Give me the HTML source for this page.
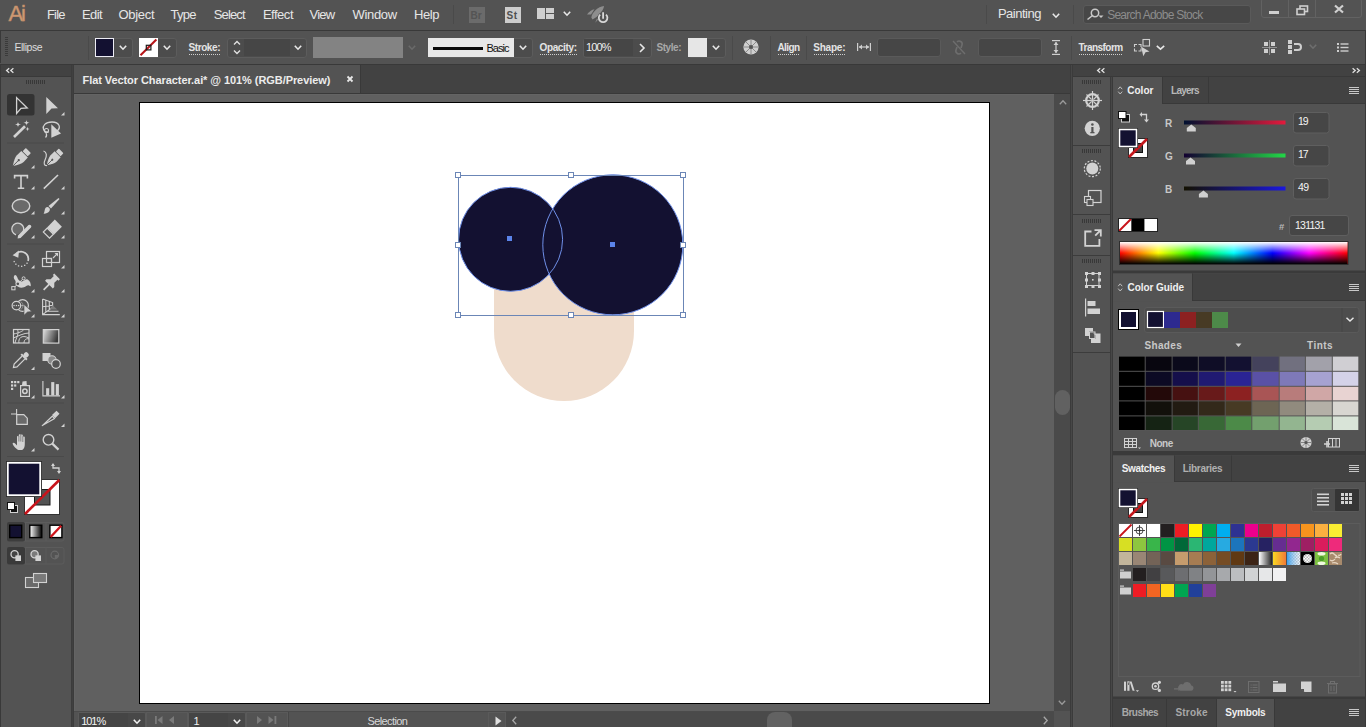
<!DOCTYPE html><html><head><meta charset="utf-8"><style>
html,body{margin:0;padding:0;}
body{width:1366px;height:727px;overflow:hidden;position:relative;background:#535353;font-family:"Liberation Sans",sans-serif;}
.a{position:absolute;box-sizing:border-box;}
.t{position:absolute;white-space:nowrap;line-height:1;}
svg.a{overflow:visible;}
</style></head><body>
<div class="a" style="left:0px;top:0px;width:1366px;height:30px;background:#535353;"></div>
<div class="a" style="left:0px;top:30px;width:1366px;height:1px;background:#393939;"></div>
<div class="t" style="left:8.50px;top:2.68px;font-size:22px;color:#cf9a74;letter-spacing:-2.062px;-webkit-text-stroke:0.5px #c08c68;">Ai</div>
<div class="t" style="left:47.00px;top:8.00px;font-size:13px;color:#e6e6e6;letter-spacing:-0.818px;">File</div>
<div class="t" style="left:82.00px;top:8.00px;font-size:13px;color:#e6e6e6;letter-spacing:-0.635px;">Edit</div>
<div class="t" style="left:118.50px;top:8.00px;font-size:13px;color:#e6e6e6;letter-spacing:-0.316px;">Object</div>
<div class="t" style="left:170.50px;top:8.00px;font-size:13px;color:#e6e6e6;letter-spacing:-0.729px;">Type</div>
<div class="t" style="left:213.80px;top:8.00px;font-size:13px;color:#e6e6e6;letter-spacing:-0.888px;">Select</div>
<div class="t" style="left:262.90px;top:8.00px;font-size:13px;color:#e6e6e6;letter-spacing:-0.480px;">Effect</div>
<div class="t" style="left:309.50px;top:8.00px;font-size:13px;color:#e6e6e6;letter-spacing:-0.751px;">View</div>
<div class="t" style="left:352.50px;top:8.00px;font-size:13px;color:#e6e6e6;letter-spacing:-0.330px;">Window</div>
<div class="t" style="left:414.00px;top:8.00px;font-size:13px;color:#e6e6e6;letter-spacing:-0.450px;">Help</div>
<div class="a" style="left:453px;top:5px;width:1px;height:19px;background:#4a4a4a;"></div>
<div class="a" style="left:469px;top:7px;width:16px;height:16px;background:#6b6b6b;"></div>
<div class="t" style="left:470.50px;top:10.54px;font-size:10px;color:#545454;font-weight:bold;">Br</div>
<div class="a" style="left:505px;top:7px;width:16px;height:16px;background:#cdcdcd;"></div>
<div class="t" style="left:506.50px;top:10.54px;font-size:10px;color:#505050;font-weight:bold;letter-spacing:0.500px;">St</div>
<div class="a" style="left:537px;top:8px;width:8px;height:11px;background:#cfcfcf;"></div>
<div class="a" style="left:546px;top:8px;width:8px;height:5px;background:#cfcfcf;"></div>
<div class="a" style="left:546px;top:14px;width:8px;height:5px;background:#cfcfcf;"></div>
<svg class="a" style="left:563px;top:11px;" width="8" height="5" viewBox="0 0 8 5"><polyline points="0.8,0.8 4.0,4.2 7.2,0.8" fill="none" stroke="#e8e8e8" stroke-width="1.6"/></svg>
<svg class="a" style="left:582px;top:2px;" width="32" height="26" viewBox="0 0 32 26"><path d="M9.3,15.4 C10,10 16,4.5 22,3.9 C21.5,9 16,14.5 10.5,17.5 Z" fill="#8e8e8e"/><path d="M5,12.5 C7,9.5 10,7.5 12.5,7.2 L9,12.5 Z" fill="#8e8e8e"/><path d="M13.2,20.7 L15,16.4 L16.5,17 Z" fill="#8e8e8e"/><circle cx="21.1" cy="15.7" r="5.6" fill="#545454"/><path d="M18.2,12.6 A4.3,4.3 0 1 0 24,12.6" fill="none" stroke="#d8d8d8" stroke-width="1.8"/><rect x="19.6" y="9.5" width="3" height="8" fill="#545454"/><line x1="21.1" y1="10.2" x2="21.1" y2="16.8" stroke="#d8d8d8" stroke-width="1.8"/></svg>
<div class="a" style="left:986px;top:5px;width:1px;height:19px;background:#4a4a4a;"></div>
<div class="t" style="left:997.90px;top:7.00px;font-size:13px;color:#e6e6e6;letter-spacing:-0.486px;">Painting</div>
<svg class="a" style="left:1052px;top:13px;" width="8" height="5" viewBox="0 0 8 5"><polyline points="0.8,0.8 4.0,4.2 7.2,0.8" fill="none" stroke="#e8e8e8" stroke-width="1.6"/></svg>
<div class="a" style="left:1073px;top:5px;width:1px;height:19px;background:#4a4a4a;"></div>
<div class="a" style="left:1083px;top:5px;width:168px;height:19px;background:#474747;border:1px solid #5a5a5a;border-radius:3px;"></div>
<svg class="a" style="left:1086px;top:8px;" width="18" height="12" viewBox="0 0 18 12"><circle cx="9" cy="5" r="3.7" fill="none" stroke="#c8c8c8" stroke-width="1.5"/><line x1="6.5" y1="7.5" x2="1.5" y2="11.5" stroke="#c8c8c8" stroke-width="1.6"/><path d="M12.5,7.5 L17.5,7.5 L15,10 Z" fill="#c8c8c8"/></svg>
<div class="t" style="left:1107.20px;top:8.84px;font-size:12px;color:#8c8c8c;letter-spacing:-0.747px;">Search Adobe Stock</div>
<div class="a" style="left:1261px;top:-2px;width:101px;height:20px;border:1px solid #626262;border-radius:3px;"></div>
<div class="a" style="left:1288px;top:0px;width:1px;height:18px;background:#626262;"></div>
<div class="a" style="left:1315px;top:0px;width:1px;height:18px;background:#626262;"></div>
<div class="a" style="left:1269px;top:11px;width:10px;height:3px;background:#cfcfcf;"></div>
<svg class="a" style="left:1296px;top:5px;" width="13" height="10" viewBox="0 0 13 10"><rect x="4" y="1" width="7.5" height="5.5" fill="none" stroke="#cfcfcf" stroke-width="1.6"/><rect x="1" y="4" width="7.5" height="5.5" fill="#545454" stroke="#cfcfcf" stroke-width="1.6"/></svg>
<svg class="a" style="left:1334px;top:5px;" width="10" height="8" viewBox="0 0 10 8"><path d="M1,0.5 L9,7.5 M9,0.5 L1,7.5" stroke="#d0d0d0" stroke-width="2.2"/></svg>
<div class="a" style="left:0px;top:31px;width:1366px;height:33px;background:#535353;"></div>
<div class="a" style="left:1365px;top:31px;width:1px;height:33px;background:#393939;"></div>
<div class="a" style="left:0px;top:64px;width:1366px;height:1px;background:#393939;"></div>
<div class="a" style="left:0px;top:31px;width:1px;height:32px;background:#393939;"></div>
<div class="a" style="left:5px;top:37px;width:3px;height:1px;background:#3a3a3a;"></div>
<div class="a" style="left:5px;top:39px;width:3px;height:1px;background:#3a3a3a;"></div>
<div class="a" style="left:5px;top:41px;width:3px;height:1px;background:#3a3a3a;"></div>
<div class="a" style="left:5px;top:43px;width:3px;height:1px;background:#3a3a3a;"></div>
<div class="a" style="left:5px;top:45px;width:3px;height:1px;background:#3a3a3a;"></div>
<div class="a" style="left:5px;top:47px;width:3px;height:1px;background:#3a3a3a;"></div>
<div class="a" style="left:5px;top:49px;width:3px;height:1px;background:#3a3a3a;"></div>
<div class="a" style="left:5px;top:51px;width:3px;height:1px;background:#3a3a3a;"></div>
<div class="a" style="left:5px;top:53px;width:3px;height:1px;background:#3a3a3a;"></div>
<div class="a" style="left:5px;top:55px;width:3px;height:1px;background:#3a3a3a;"></div>
<div class="t" style="left:14.50px;top:41.61px;font-size:10.5px;color:#dcdcdc;letter-spacing:-0.487px;">Ellipse</div>
<div class="a" style="left:88px;top:36px;width:1px;height:24px;background:#4a4a4a;"></div>
<div class="a" style="left:95px;top:37.5px;width:38px;height:20px;background:#4c4c4c;border:1px solid #5c5c5c;border-radius:3px;"></div>
<div class="a" style="left:95px;top:38px;width:19px;height:19px;background:#131131;border:1.5px solid #ececf4;"></div>
<svg class="a" style="left:119px;top:45px;" width="8" height="5" viewBox="0 0 8 5"><polyline points="0.8,0.8 4.0,4.2 7.2,0.8" fill="none" stroke="#e8e8e8" stroke-width="1.6"/></svg>
<div class="a" style="left:139px;top:37.5px;width:38px;height:20px;background:#4c4c4c;border:1px solid #5c5c5c;border-radius:3px;"></div>
<svg class="a" style="left:139px;top:38px;" width="19" height="19" viewBox="0 0 19 19"><rect x="0" y="0" width="19" height="19" fill="#ffffff"/><line x1="1.5" y1="17.2" x2="17.4" y2="1.6" stroke="#b8161a" stroke-width="2.1"/><rect x="7.3" y="7.3" width="4.6" height="4.6" fill="none" stroke="#1a1a1a" stroke-width="1.2"/></svg>
<svg class="a" style="left:163px;top:45px;" width="8" height="5" viewBox="0 0 8 5"><polyline points="0.8,0.8 4.0,4.2 7.2,0.8" fill="none" stroke="#e8e8e8" stroke-width="1.6"/></svg>
<div class="t" style="left:188.50px;top:42.83px;font-size:10px;color:#e4e4e4;font-weight:bold;letter-spacing:-0.409px;">Stroke:</div>
<div class="a" style="left:189px;top:54px;width:31px;height:1px;background-image:linear-gradient(90deg,#cfcfcf 50%,transparent 50%);background-size:2px 1px;"></div>
<div class="a" style="left:227px;top:37.5px;width:80px;height:20px;background:#4c4c4c;border:1px solid #5c5c5c;border-radius:3px;"></div>
<div class="a" style="left:244px;top:39px;width:46px;height:17px;background:#464646;"></div>
<svg class="a" style="left:233px;top:40px;" width="8" height="15" viewBox="0 0 8 15"><polyline points="1,4.5 4,1.5 7,4.5" fill="none" stroke="#e0e0e0" stroke-width="1.4"/><polyline points="1,10.5 4,13.5 7,10.5" fill="none" stroke="#e0e0e0" stroke-width="1.4"/></svg>
<svg class="a" style="left:294px;top:45px;" width="8" height="5" viewBox="0 0 8 5"><polyline points="0.8,0.8 4.0,4.2 7.2,0.8" fill="none" stroke="#e8e8e8" stroke-width="1.6"/></svg>
<div class="a" style="left:313px;top:37px;width:90px;height:21px;background:#838383;"></div>
<svg class="a" style="left:408px;top:45px;" width="8" height="5" viewBox="0 0 8 5"><polyline points="0.8,0.8 4.0,4.2 7.2,0.8" fill="none" stroke="#6a6a6a" stroke-width="1.6"/></svg>
<div class="a" style="left:428px;top:37.5px;width:105px;height:20px;background:#4c4c4c;border:1px solid #5c5c5c;border-radius:3px;"></div>
<div class="a" style="left:428px;top:38px;width:86px;height:19px;background:#e8e8e8;"></div>
<div class="a" style="left:433px;top:47px;width:50px;height:3px;background:#0a0a0a;"></div>
<div class="t" style="left:486.50px;top:42.69px;font-size:11px;color:#111;letter-spacing:-0.977px;">Basic</div>
<svg class="a" style="left:519px;top:45px;" width="8" height="5" viewBox="0 0 8 5"><polyline points="0.8,0.8 4.0,4.2 7.2,0.8" fill="none" stroke="#e8e8e8" stroke-width="1.6"/></svg>
<div class="t" style="left:539.50px;top:42.83px;font-size:10px;color:#e4e4e4;font-weight:bold;letter-spacing:-0.359px;">Opacity:</div>
<div class="a" style="left:540px;top:54px;width:37px;height:1px;background-image:linear-gradient(90deg,#cfcfcf 50%,transparent 50%);background-size:2px 1px;"></div>
<div class="a" style="left:583px;top:37.5px;width:69px;height:20px;background:#4c4c4c;border:1px solid #5c5c5c;border-radius:3px;"></div>
<div class="a" style="left:584px;top:39px;width:49px;height:17px;background:#464646;"></div>
<div class="t" style="left:586.00px;top:41.69px;font-size:11px;color:#f0f0f0;letter-spacing:-0.885px;">100%</div>
<svg class="a" style="left:639px;top:43px;" width="6" height="10" viewBox="0 0 6 10"><polyline points="1,1 5,5 1,9" fill="none" stroke="#e8e8e8" stroke-width="1.6"/></svg>
<div class="t" style="left:656.50px;top:42.83px;font-size:10px;color:#a8a8a8;font-weight:bold;letter-spacing:-0.447px;">Style:</div>
<div class="a" style="left:688px;top:37.5px;width:38px;height:20px;background:#4c4c4c;border:1px solid #5c5c5c;border-radius:3px;"></div>
<div class="a" style="left:688px;top:38px;width:19px;height:19px;background:#e6e6e6;"></div>
<svg class="a" style="left:712px;top:45px;" width="8" height="5" viewBox="0 0 8 5"><polyline points="0.8,0.8 4.0,4.2 7.2,0.8" fill="none" stroke="#e8e8e8" stroke-width="1.6"/></svg>
<div class="a" style="left:732px;top:36px;width:1px;height:24px;background:#4a4a4a;"></div>
<svg class="a" style="left:743px;top:39px;" width="16" height="16" viewBox="0 0 16 16"><circle cx="8" cy="8" r="7.6" fill="#cfcfcf"/><g stroke="#8a8a8a" stroke-width="1"><line x1="8" y1="1" x2="8" y2="15"/><line x1="1" y1="8" x2="15" y2="8"/><line x1="3" y1="3" x2="13" y2="13"/><line x1="13" y1="3" x2="3" y2="13"/></g><circle cx="8" cy="8" r="2" fill="#555"/></svg>
<div class="a" style="left:770px;top:36px;width:1px;height:24px;background:#4a4a4a;"></div>
<div class="t" style="left:777.50px;top:42.83px;font-size:10px;color:#e4e4e4;font-weight:bold;letter-spacing:-0.600px;">Align</div>
<div class="a" style="left:778px;top:54px;width:22px;height:1px;background-image:linear-gradient(90deg,#cfcfcf 50%,transparent 50%);background-size:2px 1px;"></div>
<div class="a" style="left:806px;top:36px;width:1px;height:24px;background:#4a4a4a;"></div>
<div class="t" style="left:813.20px;top:42.83px;font-size:10px;color:#e4e4e4;font-weight:bold;letter-spacing:-0.209px;">Shape:</div>
<div class="a" style="left:814px;top:54px;width:31px;height:1px;background-image:linear-gradient(90deg,#cfcfcf 50%,transparent 50%);background-size:2px 1px;"></div>
<svg class="a" style="left:857px;top:43px;" width="14" height="8" viewBox="0 0 14 8"><line x1="0.6" y1="0" x2="0.6" y2="8" stroke="#cfcfcf" stroke-width="1.2"/><line x1="13.4" y1="0" x2="13.4" y2="8" stroke="#cfcfcf" stroke-width="1.2"/><line x1="2" y1="4" x2="12" y2="4" stroke="#cfcfcf" stroke-width="1.2"/><path d="M2,4 L5,1.5 L5,6.5Z M12,4 L9,1.5 L9,6.5Z" fill="#cfcfcf"/></svg>
<div class="a" style="left:877px;top:38px;width:64px;height:19px;background:#464646;border:1px solid #5a5a5a;border-radius:3px;"></div>
<svg class="a" style="left:952px;top:40px;" width="14" height="15" viewBox="0 0 14 15"><path d="M5,2 a3,3 0 0 1 5,3 L9,8 M9,13 a3,3 0 0 1 -5,-3 L5,7" fill="none" stroke="#6e6e6e" stroke-width="1.6"/><line x1="1" y1="1" x2="13" y2="14" stroke="#6e6e6e" stroke-width="1.4"/></svg>
<div class="a" style="left:978px;top:38px;width:64px;height:19px;background:#464646;border:1px solid #5a5a5a;border-radius:3px;"></div>
<svg class="a" style="left:1052px;top:40px;" width="8" height="15" viewBox="0 0 8 15"><line x1="0" y1="0.6" x2="8" y2="0.6" stroke="#cfcfcf" stroke-width="1.2"/><line x1="0" y1="14.4" x2="8" y2="14.4" stroke="#cfcfcf" stroke-width="1.2"/><line x1="4" y1="2" x2="4" y2="13" stroke="#cfcfcf" stroke-width="1.2"/><path d="M4,2 L1.5,5 L6.5,5Z M4,13 L1.5,10 L6.5,10Z" fill="#cfcfcf"/></svg>
<div class="a" style="left:1071px;top:36px;width:1px;height:24px;background:#4a4a4a;"></div>
<div class="t" style="left:1078.50px;top:42.83px;font-size:10px;color:#e4e4e4;font-weight:bold;letter-spacing:-0.526px;">Transform</div>
<div class="a" style="left:1079px;top:54px;width:44px;height:1px;background-image:linear-gradient(90deg,#cfcfcf 50%,transparent 50%);background-size:2px 1px;"></div>
<svg class="a" style="left:1133px;top:38px;" width="18" height="19" viewBox="0 0 18 19"><path d="M1.5,9 V6.5 H4 M5.5,6.5 H8 V9 M8,10.5 V13 H5.5 M4,13 H1.5 V10.5" fill="none" stroke="#cfcfcf" stroke-width="1.1"/><rect x="10" y="1.5" width="6.5" height="6.5" fill="none" stroke="#cfcfcf" stroke-width="1.1"/><path d="M8,8.5 L16.5,13.5 L12.5,14.3 L10.3,18.3 Z" fill="#cfcfcf"/></svg>
<svg class="a" style="left:1156px;top:45px;" width="9" height="5" viewBox="0 0 9 5"><polyline points="0.8,0.8 4.5,4.2 8.2,0.8" fill="none" stroke="#e8e8e8" stroke-width="1.6"/></svg>
<svg class="a" style="left:1262px;top:40px;" width="15" height="15" viewBox="0 0 15 15"><rect x="2" y="2" width="4" height="4" fill="#cfcfcf"/><rect x="9" y="2" width="4" height="4" fill="#cfcfcf"/><rect x="2" y="9" width="4" height="4" fill="#cfcfcf"/><rect x="9" y="9" width="4" height="4" fill="#cfcfcf"/><line x1="7.5" y1="0" x2="7.5" y2="15" stroke="#a0a0a0" stroke-width="0.8"/><line x1="0" y1="7.5" x2="15" y2="7.5" stroke="#a0a0a0" stroke-width="0.8"/></svg>
<svg class="a" style="left:1288px;top:40px;" width="15" height="14" viewBox="0 0 15 14"><rect x="0" y="0" width="4" height="4" fill="#cfcfcf"/><rect x="0" y="5" width="4" height="4" fill="#cfcfcf"/><rect x="0" y="10" width="4" height="4" fill="#cfcfcf"/><path d="M6,4 H10 a3,3 0 0 1 0,6 H6" fill="none" stroke="#cfcfcf" stroke-width="2"/></svg>
<svg class="a" style="left:1309px;top:44px;" width="8" height="5" viewBox="0 0 8 5"><polyline points="0.8,0.8 4.0,4.2 7.2,0.8" fill="none" stroke="#6e6e6e" stroke-width="1.6"/></svg>
<svg class="a" style="left:1337px;top:43px;" width="12" height="9" viewBox="0 0 12 9"><rect x="0" y="0" width="2" height="2" fill="#cfcfcf"/><rect x="0" y="3.5" width="2" height="2" fill="#cfcfcf"/><rect x="0" y="7" width="2" height="2" fill="#cfcfcf"/><rect x="3.5" y="0.3" width="8" height="1.4" fill="#cfcfcf"/><rect x="3.5" y="3.8" width="8" height="1.4" fill="#cfcfcf"/><rect x="3.5" y="7.3" width="8" height="1.4" fill="#cfcfcf"/></svg>
<div class="a" style="left:0px;top:64px;width:1px;height:663px;background:#393939;"></div>
<div class="a" style="left:1px;top:65px;width:70px;height:11px;background:#424242;"></div>
<div class="a" style="left:1px;top:76px;width:70px;height:1px;background:#393939;"></div>
<svg class="a" style="left:5.5px;top:68px;" width="8" height="5" viewBox="0 0 8 5"><path d="M3.2,0.3 L0.6,2.5 L3.2,4.7 M7.4,0.3 L4.8,2.5 L7.4,4.7" fill="none" stroke="#e0e0e0" stroke-width="1.3"/></svg>
<div class="a" style="left:1px;top:77px;width:70px;height:650px;background:#535353;"></div>
<div class="a" style="left:71px;top:65px;width:3px;height:662px;background:#3c3c3c;"></div>
<div class="a" style="left:72px;top:65px;width:1px;height:662px;background:#404040;"></div>
<div class="a" style="left:26px;top:80px;width:1px;height:4px;background:#383838;"></div>
<div class="a" style="left:28px;top:80px;width:1px;height:4px;background:#383838;"></div>
<div class="a" style="left:30px;top:80px;width:1px;height:4px;background:#383838;"></div>
<div class="a" style="left:32px;top:80px;width:1px;height:4px;background:#383838;"></div>
<div class="a" style="left:34px;top:80px;width:1px;height:4px;background:#383838;"></div>
<div class="a" style="left:36px;top:80px;width:1px;height:4px;background:#383838;"></div>
<div class="a" style="left:38px;top:80px;width:1px;height:4px;background:#383838;"></div>
<div class="a" style="left:40px;top:80px;width:1px;height:4px;background:#383838;"></div>
<div class="a" style="left:42px;top:80px;width:1px;height:4px;background:#383838;"></div>
<div class="a" style="left:44px;top:80px;width:1px;height:4px;background:#383838;"></div>
<div class="a" style="left:74px;top:65px;width:996px;height:28px;background:#424242;"></div>
<div class="a" style="left:74px;top:65px;width:286px;height:28px;background:#535353;"></div>
<div class="a" style="left:360px;top:65px;width:1px;height:28px;background:#393939;"></div>
<div class="a" style="left:74px;top:93px;width:996px;height:1px;background:#393939;"></div>
<div class="t" style="left:82.50px;top:74.69px;font-size:11px;color:#ececec;font-weight:bold;letter-spacing:-0.069px;">Flat Vector Character.ai* @ 101% (RGB/Preview)</div>
<svg class="a" style="left:347px;top:76px;" width="6" height="6" viewBox="0 0 6 6"><path d="M0.5,0.5 L5.5,5.5 M5.5,0.5 L0.5,5.5" stroke="#e8e8e8" stroke-width="1.8"/></svg>
<div class="a" style="left:74px;top:94px;width:980px;height:617px;background:#606060;"></div>
<div class="a" style="left:74px;top:94px;width:980px;height:1px;background:#646464;"></div>
<div class="a" style="left:74px;top:94px;width:1px;height:617px;background:#646464;"></div>
<div class="a" style="left:139px;top:102px;width:851px;height:602px;background:#ffffff;border:1px solid #000;"></div>
<div class="a" style="left:1054px;top:94px;width:16px;height:617px;background:#4a4a4a;"></div>
<svg class="a" style="left:1058.5px;top:100px;" width="8" height="5" viewBox="0 0 8 5"><polyline points="0.8,4.2 4,0.8 7.2,4.2" fill="none" stroke="#9a9a9a" stroke-width="1.3"/></svg>
<svg class="a" style="left:1058px;top:700px;" width="8" height="5" viewBox="0 0 8 5"><polyline points="0.8,0.8 4.0,4.2 7.2,0.8" fill="none" stroke="#9a9a9a" stroke-width="1.3"/></svg>
<div class="a" style="left:1055px;top:390px;width:15px;height:25px;background:#616161;border-radius:7.5px;"></div>
<div class="a" style="left:74px;top:711px;width:980px;height:16px;background:#535353;"></div>
<div class="a" style="left:1054px;top:711px;width:16px;height:16px;background:#535353;"></div>
<div class="a" style="left:1070px;top:65px;width:3px;height:662px;background:#3b3b3b;"></div>
<div class="a" style="left:1071px;top:65px;width:1px;height:662px;background:#474747;"></div>
<div class="a" style="left:1073px;top:77px;width:1px;height:650px;background:#555555;"></div>
<div class="a" style="left:1073px;top:65px;width:293px;height:11px;background:#424242;"></div>
<div class="a" style="left:1073px;top:76px;width:293px;height:1px;background:#393939;"></div>
<svg class="a" style="left:1097px;top:68px;" width="8" height="5" viewBox="0 0 8 5"><path d="M3.2,0.3 L0.6,2.5 L3.2,4.7 M7.4,0.3 L4.8,2.5 L7.4,4.7" fill="none" stroke="#e0e0e0" stroke-width="1.3"/></svg>
<svg class="a" style="left:1351.5px;top:68px;" width="8" height="5" viewBox="0 0 8 5"><path d="M0.6,0.3 L3.2,2.5 L0.6,4.7 M4.8,0.3 L7.4,2.5 L4.8,4.7" fill="none" stroke="#e0e0e0" stroke-width="1.3"/></svg>
<div class="a" style="left:1074px;top:77px;width:36px;height:650px;background:#535353;"></div>
<div class="a" style="left:1110px;top:77px;width:3px;height:650px;background:#3a3a3a;"></div>
<div class="a" style="left:1111px;top:77px;width:1px;height:650px;background:#474747;"></div>
<div class="a" style="left:1365px;top:77px;width:1px;height:650px;background:#3a3a3a;"></div>
<div class="a" style="left:1113px;top:77px;width:252px;height:650px;background:#535353;"></div>
<div class="a" style="left:1365px;top:65px;width:1px;height:662px;background:#393939;"></div>
<svg class="a" style="left:0;top:0" width="73" height="727" viewBox="0 0 73 727"><rect x="7" y="142.5" width="57" height="1" fill="#4a4a4a"/><rect x="7" y="243.5" width="57" height="1" fill="#4a4a4a"/><rect x="7" y="321.0" width="57" height="1" fill="#4a4a4a"/><rect x="7" y="374.0" width="57" height="1" fill="#4a4a4a"/><rect x="7" y="402.5" width="57" height="1" fill="#4a4a4a"/><rect x="7" y="456.0" width="57" height="1" fill="#4a4a4a"/><rect x="7" y="94" width="27.5" height="21.5" rx="2.5" fill="#333333"/><path d="M16.6,97.6 L27.2,108 L21,108.3 L16.6,113.4 Z" fill="none" stroke="#d2d2d2" stroke-width="1.3" stroke-linejoin="miter"/><path d="M46.3,97 L58,108.2 L51.5,108.5 L46.3,114 Z" fill="#d2d2d2"/><path d="M61.0,115.5 L64.5,115.5 L64.5,112.0 Z" fill="#d2d2d2"/><line x1="14" y1="137" x2="25" y2="126.3" stroke="#d2d2d2" stroke-width="2.6"/><path d="M18,121.3 Q18,124.5 21.2,124.5 Q18,124.5 18,127.7 Q18,124.5 14.8,124.5 Q18,124.5 18,121.3 Z" fill="#d2d2d2"/><path d="M26.5,119.6 Q26.5,122.8 29.7,122.8 Q26.5,122.8 26.5,126.0 Q26.5,122.8 23.3,122.8 Q26.5,122.8 26.5,119.6 Z" fill="#d2d2d2"/><path d="M27.5,126.8 Q27.5,129 29.7,129 Q27.5,129 27.5,131.2 Q27.5,129 25.3,129 Q27.5,129 27.5,126.8 Z" fill="#d2d2d2"/><path d="M57,131 C61,128 60,122 52,122 C45,122 42.5,126 43.5,129 C44,131 46,132.5 48.5,132" fill="none" stroke="#d2d2d2" stroke-width="1.3"/><circle cx="46.5" cy="130.5" r="2" fill="none" stroke="#d2d2d2" stroke-width="1.1"/><path d="M46,133 Q47.5,136 45.5,137.5" fill="none" stroke="#d2d2d2" stroke-width="1.1"/><path d="M51.3,124.3 L61,133.5 L51.3,137.8 Z" fill="#d2d2d2"/><g transform="translate(20.6,158.3) rotate(45) scale(1.0)"><rect x="-3.6" y="-11" width="7.2" height="4.6" rx="0.8" fill="#d2d2d2"/><path d="M-4.6,-5.6 L4.6,-5.6 L4.8,0.5 Q4.6,4.5 0,11 Q-4.6,4.5 -4.8,0.5 Z" fill="#d2d2d2"/><line x1="0" y1="3" x2="0" y2="11" stroke="#535353" stroke-width="0.9"/><circle cx="0" cy="2.6" r="1.1" fill="#535353"/></g><path d="M31.0,168.5 L34.5,168.5 L34.5,165.0 Z" fill="#d2d2d2"/><g transform="translate(54,158) rotate(45) scale(0.92)"><rect x="-3.6" y="-11" width="7.2" height="4.6" rx="0.8" fill="#d2d2d2"/><path d="M-4.6,-5.6 L4.6,-5.6 L4.8,0.5 Q4.6,4.5 0,11 Q-4.6,4.5 -4.8,0.5 Z" fill="#d2d2d2"/><line x1="0" y1="3" x2="0" y2="11" stroke="#535353" stroke-width="0.9"/><circle cx="0" cy="2.6" r="1.1" fill="#535353"/></g><path d="M43.5,151 C47,152 47,156 45,160 C43.5,163 44,166 47,165.5" fill="none" stroke="#d2d2d2" stroke-width="1.2"/><path d="M14.6,178.5 V175.6 H27.4 V178.5 M21,175.6 V188.2 M17.8,188.2 H24.2" fill="none" stroke="#d2d2d2" stroke-width="1.6"/><path d="M31.0,189.5 L34.5,189.5 L34.5,186.0 Z" fill="#d2d2d2"/><line x1="43.8" y1="188.6" x2="58" y2="175" stroke="#d2d2d2" stroke-width="1.6"/><path d="M61.0,189.5 L64.5,189.5 L64.5,186.0 Z" fill="#d2d2d2"/><ellipse cx="21" cy="206" rx="8.8" ry="6.7" fill="#6a6a6a" stroke="#d2d2d2" stroke-width="1.4"/><path d="M31.0,214.5 L34.5,214.5 L34.5,211.0 Z" fill="#d2d2d2"/><path d="M58.5,198 L59.5,199 L51,208.5 L48.5,206 Z" fill="#d2d2d2"/><path d="M47.5,207 C49.5,207.5 50.5,209 49.5,211 C48,213.5 45,213.8 43.5,213.6 C44.5,212.5 44.5,210.5 45,209 C45.5,207.5 46.5,206.8 47.5,207 Z" fill="#d2d2d2"/><path d="M61.0,214.5 L64.5,214.5 L64.5,211.0 Z" fill="#d2d2d2"/><path d="M22.7,232.5 A6,6 0 1 0 16,234.8" fill="#6a6a6a" stroke="#d2d2d2" stroke-width="1.3"/><path d="M18,235.6 L28.5,225 A1.8,1.8 0 0 1 31,227.5 L20.5,238 L17.6,238.6 Z" fill="#d2d2d2"/><path d="M31.0,238.5 L34.5,238.5 L34.5,235.0 Z" fill="#d2d2d2"/><g transform="translate(52,229.5) rotate(45)"><rect x="-5" y="-9" width="10" height="11" fill="#d2d2d2"/><rect x="-4.4" y="2.4" width="8.8" height="5.5" fill="none" stroke="#d2d2d2" stroke-width="1.2"/></g><path d="M61.0,238.5 L64.5,238.5 L64.5,235.0 Z" fill="#d2d2d2"/><path d="M16.8,253 A7.3,7.3 0 0 1 28.05,260.9" fill="none" stroke="#d2d2d2" stroke-width="1.7"/><path d="M12.6,255.2 L19,250.6 L18.3,257.8 Z" fill="#d2d2d2"/><rect x="26.38" y="262.59" width="1.3" height="1.3" fill="#d2d2d2"/><rect x="24.05" y="264.72" width="1.3" height="1.3" fill="#d2d2d2"/><rect x="21.04" y="265.67" width="1.3" height="1.3" fill="#d2d2d2"/><rect x="17.90" y="265.26" width="1.3" height="1.3" fill="#d2d2d2"/><rect x="15.24" y="263.56" width="1.3" height="1.3" fill="#d2d2d2"/><rect x="13.54" y="260.90" width="1.3" height="1.3" fill="#d2d2d2"/><path d="M31.0,268.5 L34.5,268.5 L34.5,265.0 Z" fill="#d2d2d2"/><rect x="46.5" y="251.5" width="13" height="11" fill="none" stroke="#d2d2d2" stroke-width="1.2"/><rect x="42.5" y="258.5" width="9" height="8" fill="#535353" stroke="#d2d2d2" stroke-width="1.2"/><rect x="46.5" y="258.5" width="5" height="4" fill="none" stroke="#d2d2d2" stroke-width="1.2"/><line x1="53" y1="258" x2="57.5" y2="253.5" stroke="#d2d2d2" stroke-width="1.1"/><path d="M58,253 L54.5,253 L58,256.5 Z" fill="#d2d2d2"/><path d="M61.0,268.5 L64.5,268.5 L64.5,265.0 Z" fill="#d2d2d2"/><path d="M14.8,275 C13.2,276.5 13.6,278.8 15,280 C16,281.5 15.6,283 16.5,285 C18,287.6 21,288.2 24,287.2 C26,286.4 27.6,284.6 29,285.4 C30,286 30.6,286.6 30.8,285.8 C31,283.8 30,280.4 27.6,279.4 C25.6,278.8 24,281 22,281.4 C19.4,281.8 18,279.6 17.4,277.6 C16.9,276 15.8,274.6 14.8,275 Z" fill="#d2d2d2"/><line x1="13.4" y1="288.2" x2="23.5" y2="278.4" stroke="#d2d2d2" stroke-width="1"/><circle cx="17.8" cy="283.8" r="1.9" fill="#535353" stroke="#d2d2d2" stroke-width="1.1"/><rect x="11.8" y="286.6" width="3.2" height="3.2" fill="#535353" stroke="#d2d2d2" stroke-width="1"/><circle cx="23.6" cy="278.3" r="1.5" fill="#535353" stroke="#d2d2d2" stroke-width="1"/><path d="M31.0,292.5 L34.5,292.5 L34.5,289.0 Z" fill="#d2d2d2"/><g transform="translate(50,283.5) rotate(45)"><path d="M-4,-10 H4 V-8 H2.6 V-3.5 L5.5,-0.5 V1.5 H-5.5 V-0.5 L-2.6,-3.5 V-8 H-4 Z" fill="#d2d2d2"/><line x1="0" y1="1" x2="0" y2="9" stroke="#d2d2d2" stroke-width="1.7"/></g><path d="M61.0,292.5 L64.5,292.5 L64.5,289.0 Z" fill="#d2d2d2"/><circle cx="22.6" cy="305.5" r="5.8" fill="none" stroke="#d2d2d2" stroke-width="1.2"/><circle cx="16.4" cy="305.6" r="4.3" fill="#535353" stroke="#d2d2d2" stroke-width="1.2"/><path d="M20.5,301.6 A4.3,4.3 0 0 1 20.5,309.6" fill="none" stroke="#8a8a8a" stroke-width="1"/><rect x="13.4" y="304.9" width="1.3" height="1.3" fill="#d2d2d2"/><rect x="15.799999999999999" y="304.9" width="1.3" height="1.3" fill="#d2d2d2"/><rect x="18.0" y="304.9" width="1.3" height="1.3" fill="#d2d2d2"/><rect x="20.2" y="304.9" width="1.3" height="1.3" fill="#d2d2d2"/><rect x="22.299999999999997" y="304.9" width="1.3" height="1.3" fill="#d2d2d2"/><path d="M24,304.4 L31.8,311.6 L27.5,312 L24,315.2 Z" fill="#d2d2d2" stroke="#535353" stroke-width="0.6"/><path d="M31.0,317.5 L34.5,317.5 L34.5,314.0 Z" fill="#d2d2d2"/><path d="M42.6,299 V314.6 H59.8 M42.6,299 L52.6,302.6 V307.3 L42.6,314.6 M42.6,306.7 L52.6,305.2 M45.8,300.2 V312.3 M49.3,301.4 V309.7 M47,311.3 H58.5" fill="none" stroke="#d2d2d2" stroke-width="1.1"/><path d="M52.6,305.3 L57.3,309.5 L49.5,309.5 Z" fill="#7c7c7c"/><path d="M61.0,317.5 L64.5,317.5 L64.5,314.0 Z" fill="#d2d2d2"/><rect x="13.5" y="329.5" width="15.5" height="13.5" fill="none" stroke="#d2d2d2" stroke-width="1.2"/><path d="M13.5,334 C19,333 23,331 24,329.5 M13.5,338 C18,336 24,333 29,333 M19,343 C18,339 21,334 29,338 M15,343 C16,338 20,332 17,329.5 M24,343 C24,340 26,338 29,339" fill="none" stroke="#d2d2d2" stroke-width="1"/><defs><linearGradient id="gtool" x1="0" x2="1" y1="0" y2="0.3"><stop offset="0" stop-color="#e0e0e0"/><stop offset="1" stop-color="#3a3a3a"/></linearGradient><linearGradient id="gsw" x1="0" x2="1"><stop offset="0" stop-color="#ffffff"/><stop offset="1" stop-color="#000000"/></linearGradient></defs><rect x="43.3" y="329.6" width="15.5" height="13.5" fill="url(#gtool)" stroke="#d2d2d2" stroke-width="1.2"/><g transform="translate(20.5,360.5) rotate(45)"><rect x="-2.5" y="-10.5" width="5" height="5" rx="2" fill="#d2d2d2"/><rect x="-4" y="-6" width="8" height="2" fill="#d2d2d2"/><path d="M-2,-4 V7 L0,10 L2,7 V-4" fill="none" stroke="#d2d2d2" stroke-width="1.2"/></g><path d="M31.0,370 L34.5,370 L34.5,366.5 Z" fill="#d2d2d2"/><rect x="42.5" y="353" width="8" height="8" fill="#d2d2d2"/><circle cx="52" cy="360" r="4.2" fill="#888" stroke="#d2d2d2" stroke-width="1.1"/><circle cx="56" cy="364" r="4.3" fill="#535353" stroke="#d2d2d2" stroke-width="1.2"/><rect x="11" y="381" width="2.2" height="2.2" fill="#d2d2d2"/><rect x="14.1" y="381" width="2.2" height="2.2" fill="#d2d2d2"/><rect x="17.2" y="381" width="2.2" height="2.2" fill="#d2d2d2"/><rect x="11" y="384.4" width="2.2" height="2.2" fill="#d2d2d2"/><rect x="14.1" y="384.4" width="2.2" height="2.2" fill="#d2d2d2"/><rect x="11" y="387.8" width="2.2" height="2.2" fill="#d2d2d2"/><rect x="20.6" y="385.6" width="8.8" height="10.8" fill="none" stroke="#d2d2d2" stroke-width="1.2"/><path d="M22,385 L22.5,381.5 L26.5,381 L26.8,385 Z" fill="#d2d2d2"/><circle cx="24.9" cy="391.2" r="2.2" fill="none" stroke="#d2d2d2" stroke-width="1.5"/><path d="M31.0,398.5 L34.5,398.5 L34.5,395.0 Z" fill="#d2d2d2"/><path d="M42.9,381 V395.9 H60" fill="none" stroke="#d2d2d2" stroke-width="1.1"/><rect x="46.1" y="388.2" width="3.1" height="7.2" fill="#d2d2d2"/><rect x="51.2" y="382.1" width="3.1" height="13.3" fill="#d2d2d2"/><rect x="55.8" y="384.1" width="3.1" height="11.3" fill="#d2d2d2"/><path d="M61.0,398.5 L64.5,398.5 L64.5,395.0 Z" fill="#d2d2d2"/><path d="M16.6,409 V415 M11,414 H17" stroke="#d2d2d2" stroke-width="1.1"/><path d="M16.7,414.6 H23.8 L27.3,418.2 V424.3 H16.7 Z" fill="#6a6a6a" stroke="#d2d2d2" stroke-width="1.2"/><path d="M42.3,425.6 L52.3,416.2 L54.6,418.6 Z" fill="none" stroke="#d2d2d2" stroke-width="1.2" stroke-linejoin="round"/><path d="M52,415 L56.5,410.8 L59.5,413.8 L55.2,418.2 Z" fill="#d2d2d2"/><path d="M61.0,427 L64.5,427 L64.5,423.5 Z" fill="#d2d2d2"/><path d="M18.5,450 C15.5,449 12.5,444.5 12.6,443.6 C12.8,442.6 14.2,442.6 15.4,443.8 L17,445.4 V437 C17,435.6 18.8,435.6 18.8,437 V442 V435.2 C18.8,433.8 20.8,433.8 20.8,435.2 V442 V435.6 C20.8,434.2 22.8,434.2 22.8,435.6 V442.4 V437.6 C22.8,436.2 24.8,436.2 24.8,437.6 V444 C24.8,447.5 23.5,450 21.5,450 Z" fill="#d2d2d2"/><path d="M18.9,436 V441.5 M20.8,435 V441.5 M22.8,436.5 V442" stroke="#535353" stroke-width="0.6"/><path d="M31.0,451.5 L34.5,451.5 L34.5,448.0 Z" fill="#d2d2d2"/><circle cx="48.5" cy="439.8" r="5.3" fill="none" stroke="#d2d2d2" stroke-width="1.4"/><line x1="52.3" y1="443.6" x2="58.5" y2="449.6" stroke="#d2d2d2" stroke-width="2.2"/><rect x="24.5" y="479.5" width="35" height="35" fill="#ffffff" stroke="#333" stroke-width="1"/><rect x="34.5" y="489.5" width="15.5" height="15.5" fill="#535353" stroke="#1a1a1a" stroke-width="1"/><line x1="25" y1="514" x2="59.3" y2="480" stroke="#c8141b" stroke-width="2.6"/><rect x="6.5" y="461.5" width="35" height="35" fill="#131131" stroke="#2a2a2a" stroke-width="1"/><rect x="7.8" y="462.8" width="32.4" height="32.4" fill="none" stroke="#ffffff" stroke-width="1.8"/><path d="M53,464 L53,468 L59,468 L59,471.5" fill="none" stroke="#d2d2d2" stroke-width="1.3"/><path d="M51,466 L53,463 L55,466 Z M57,471 L59,474 L61,471 Z" fill="#d2d2d2"/><rect x="10.5" y="505.5" width="7" height="7" fill="#111" stroke="#d2d2d2" stroke-width="1"/><rect x="7.5" y="502.5" width="7" height="7" fill="#fff" stroke="#111" stroke-width="1"/><rect x="7.5" y="522.5" width="56.5" height="18.5" rx="2" fill="none" stroke="#5c5c5c" stroke-width="1"/><rect x="7" y="522" width="18" height="19.5" rx="2" fill="#3d3d3d"/><rect x="25" y="522.5" width="1" height="18.5" fill="#5c5c5c"/><rect x="45.5" y="522.5" width="1" height="18.5" fill="#5c5c5c"/><rect x="9.7" y="525.2" width="12" height="12.4" fill="#131131" stroke="#000" stroke-width="1.4"/><rect x="29.8" y="525.2" width="12" height="12.4" fill="url(#gsw)" stroke="#000" stroke-width="1.4"/><rect x="49.9" y="525.2" width="12" height="12.4" fill="#fff" stroke="#000" stroke-width="1.4"/><line x1="50.6" y1="537" x2="61.2" y2="525.8" stroke="#d0141b" stroke-width="2.4"/><rect x="7.5" y="547.5" width="56.5" height="16.5" rx="2" fill="none" stroke="#5c5c5c" stroke-width="1"/><rect x="7" y="547" width="18" height="17.5" rx="2" fill="#3a3a3a"/><rect x="25" y="547.5" width="1" height="16.5" fill="#5a5a5a"/><rect x="45.5" y="547.5" width="1" height="16.5" fill="#5a5a5a"/><circle cx="14.6" cy="554.3" r="3.6" fill="#444" stroke="#d2d2d2" stroke-width="1.3"/><rect x="15.4" y="555.4" width="5.6" height="5.6" fill="#d2d2d2"/><circle cx="34.6" cy="554.3" r="3.6" fill="#7a7a7a" stroke="#d2d2d2" stroke-width="1.3"/><rect x="35.4" y="555.4" width="5.6" height="5.6" fill="#d2d2d2"/><circle cx="54.8" cy="555" r="3.8" fill="none" stroke="#6a6a6a" stroke-width="1.2"/><path d="M54.8,555 L58.6,555 A3.8,3.8 0 0 1 54.8,558.8 Z" fill="#6a6a6a"/><rect x="25.5" y="577.5" width="13" height="10" fill="#6a6a6a" stroke="#d2d2d2" stroke-width="1.1"/><rect x="33.5" y="573.5" width="13" height="9" fill="#7a7a7a" stroke="#d2d2d2" stroke-width="1.1"/></svg>
<svg class="a" style="left:0;top:0" width="1054" height="711" viewBox="0 0 1054 711"><path d="M494,262 H634 V331 A70,70 0 0 1 494,331 Z" fill="#efdccc"/><circle cx="510.6" cy="239.3" r="52" fill="#131131"/><circle cx="612.8" cy="244.8" r="70" fill="#131131"/><circle cx="510.6" cy="239.3" r="52" fill="none" stroke="#6f8fe8" stroke-width="1"/><circle cx="612.8" cy="244.8" r="70" fill="none" stroke="#6f8fe8" stroke-width="1"/><rect x="458.5" y="175.5" width="225" height="140" fill="none" stroke="#6b86b6" stroke-width="1"/><rect x="455.5" y="172.5" width="5" height="5" fill="#ffffff" stroke="#6b86b6" stroke-width="1"/><rect x="568.5" y="172.5" width="5" height="5" fill="#ffffff" stroke="#6b86b6" stroke-width="1"/><rect x="680.5" y="172.5" width="5" height="5" fill="#ffffff" stroke="#6b86b6" stroke-width="1"/><rect x="455.5" y="242.5" width="5" height="5" fill="#ffffff" stroke="#6b86b6" stroke-width="1"/><rect x="680.5" y="242.5" width="5" height="5" fill="#ffffff" stroke="#6b86b6" stroke-width="1"/><rect x="455.5" y="312.5" width="5" height="5" fill="#ffffff" stroke="#6b86b6" stroke-width="1"/><rect x="568.5" y="312.5" width="5" height="5" fill="#ffffff" stroke="#6b86b6" stroke-width="1"/><rect x="680.5" y="312.5" width="5" height="5" fill="#ffffff" stroke="#6b86b6" stroke-width="1"/><rect x="507" y="236" width="5" height="5" fill="#5b84ea"/><rect x="610" y="242" width="5" height="5" fill="#5b84ea"/></svg>
<div class="a" style="left:74px;top:711px;width:980px;height:1px;background:#4b4b4b;"></div>
<div class="a" style="left:78px;top:712px;width:68px;height:15px;background:#484848;border:1px solid #5a5a5a;border-bottom:none;border-radius:2px 2px 0 0;"></div>
<div class="a" style="left:79px;top:713px;width:49px;height:14px;background:#454545;"></div>
<svg class="a" style="left:133px;top:719px;" width="8" height="5" viewBox="0 0 8 5"><polyline points="0.8,0.8 4,4.2 7.2,0.8" fill="none" stroke="#f0f0f0" stroke-width="1.6"/></svg>
<div class="a" style="left:146px;top:712px;width:42px;height:15px;background:#535353;border:1px solid #5a5a5a;border-bottom:none;"></div>
<svg class="a" style="left:155px;top:716px;" width="22" height="9" viewBox="0 0 22 9"><rect x="0" y="0" width="1.8" height="8" fill="#7a7a7a"/><path d="M7.5,0 L2.5,4 L7.5,8Z" fill="#7a7a7a"/><path d="M19,0 L14,4 L19,8Z" fill="#7a7a7a"/></svg>
<div class="a" style="left:188px;top:712px;width:58px;height:15px;background:#484848;border:1px solid #5a5a5a;border-bottom:none;border-radius:2px 2px 0 0;"></div>
<div class="a" style="left:189px;top:713px;width:39px;height:14px;background:#454545;"></div>
<svg class="a" style="left:233px;top:719px;" width="8" height="5" viewBox="0 0 8 5"><polyline points="0.8,0.8 4,4.2 7.2,0.8" fill="none" stroke="#f0f0f0" stroke-width="1.6"/></svg>
<div class="a" style="left:246px;top:712px;width:42px;height:15px;background:#535353;border:1px solid #5a5a5a;border-bottom:none;"></div>
<svg class="a" style="left:257px;top:716px;" width="22" height="9" viewBox="0 0 22 9"><path d="M0,0 L5,4 L0,8Z" fill="#7a7a7a"/><path d="M11.5,0 L16.5,4 L11.5,8Z" fill="#7a7a7a"/><rect x="17.5" y="0" width="1.8" height="8" fill="#7a7a7a"/></svg>
<div class="a" style="left:288px;top:712px;width:1px;height:15px;background:#474747;"></div>
<div class="t" style="left:81.20px;top:715.69px;font-size:11px;color:#f4f4f4;letter-spacing:-1.052px;">101%</div>
<div class="t" style="left:193.50px;top:715.69px;font-size:11px;color:#f0f0f0;">1</div>
<div class="t" style="left:367.50px;top:716.19px;font-size:11px;color:#d8d8d8;letter-spacing:-0.598px;">Selection</div>
<div class="a" style="left:488px;top:712px;width:18px;height:15px;background:#535353;border:1px solid #5a5a5a;border-bottom:none;"></div>
<svg class="a" style="left:495px;top:716px;" width="7" height="10" viewBox="0 0 7 10"><path d="M0.5,0.5 L6.5,5 L0.5,9.5Z" fill="#e0e0e0"/></svg>
<div class="a" style="left:506px;top:712px;width:548px;height:15px;background:#4a4a4a;"></div>
<svg class="a" style="left:512px;top:715.5px;" width="5" height="9" viewBox="0 0 5 9"><polyline points="4.2,0.8 0.8,4.5 4.2,8.2" fill="none" stroke="#a8a8a8" stroke-width="1.3"/></svg>
<svg class="a" style="left:1043px;top:715.5px;" width="5" height="9" viewBox="0 0 5 9"><polyline points="0.8,0.8 4.2,4.5 0.8,8.2" fill="none" stroke="#a8a8a8" stroke-width="1.3"/></svg>
<div class="a" style="left:767px;top:712px;width:25px;height:15px;background:#626262;border-radius:8px 8px 0 0/8px 8px 0 0;"></div>
<svg class="a" style="left:0;top:0" width="1366" height="727" viewBox="0 0 1366 727"><rect x="1082" y="80" width="1" height="4" fill="#383838"/><rect x="1084" y="80" width="1" height="4" fill="#383838"/><rect x="1086" y="80" width="1" height="4" fill="#383838"/><rect x="1088" y="80" width="1" height="4" fill="#383838"/><rect x="1090" y="80" width="1" height="4" fill="#383838"/><rect x="1092" y="80" width="1" height="4" fill="#383838"/><rect x="1094" y="80" width="1" height="4" fill="#383838"/><rect x="1096" y="80" width="1" height="4" fill="#383838"/><rect x="1098" y="80" width="1" height="4" fill="#383838"/><rect x="1100" y="80" width="1" height="4" fill="#383838"/><circle cx="1092.5" cy="100.5" r="6.3" fill="none" stroke="#d2d2d2" stroke-width="2.2"/><circle cx="1092.5" cy="100.5" r="1.5" fill="#d2d2d2"/><line x1="1094.00" y1="100.50" x2="1102.00" y2="100.50" stroke="#d2d2d2" stroke-width="1.2"/><line x1="1093.56" y1="101.56" x2="1098.51" y2="106.51" stroke="#d2d2d2" stroke-width="1.2"/><line x1="1092.50" y1="102.00" x2="1092.50" y2="110.00" stroke="#d2d2d2" stroke-width="1.2"/><line x1="1091.44" y1="101.56" x2="1086.49" y2="106.51" stroke="#d2d2d2" stroke-width="1.2"/><line x1="1091.00" y1="100.50" x2="1083.00" y2="100.50" stroke="#d2d2d2" stroke-width="1.2"/><line x1="1091.44" y1="99.44" x2="1086.49" y2="94.49" stroke="#d2d2d2" stroke-width="1.2"/><line x1="1092.50" y1="99.00" x2="1092.50" y2="91.00" stroke="#d2d2d2" stroke-width="1.2"/><line x1="1093.56" y1="99.44" x2="1098.51" y2="94.49" stroke="#d2d2d2" stroke-width="1.2"/><circle cx="1092.3" cy="128.3" r="7.6" fill="#d2d2d2"/><rect x="1091.3" y="127" width="2.2" height="5.5" fill="#535353"/><rect x="1090.3" y="132" width="4.2" height="1.3" fill="#535353"/><circle cx="1092.4" cy="124.5" r="1.3" fill="#535353"/><rect x="1073" y="145" width="37" height="1" fill="#3c3c3c"/><rect x="1082" y="149" width="1" height="4" fill="#383838"/><rect x="1084" y="149" width="1" height="4" fill="#383838"/><rect x="1086" y="149" width="1" height="4" fill="#383838"/><rect x="1088" y="149" width="1" height="4" fill="#383838"/><rect x="1090" y="149" width="1" height="4" fill="#383838"/><rect x="1092" y="149" width="1" height="4" fill="#383838"/><rect x="1094" y="149" width="1" height="4" fill="#383838"/><rect x="1096" y="149" width="1" height="4" fill="#383838"/><rect x="1098" y="149" width="1" height="4" fill="#383838"/><rect x="1100" y="149" width="1" height="4" fill="#383838"/><circle cx="1092.3" cy="168.6" r="6" fill="#d2d2d2"/><circle cx="1092.3" cy="168.6" r="8" fill="none" stroke="#d2d2d2" stroke-width="1.2" stroke-dasharray="2 1.6"/><rect x="1088.5" y="190.5" width="12.5" height="12" fill="none" stroke="#d2d2d2" stroke-width="1.2"/><rect x="1084.5" y="196.5" width="6" height="6" fill="#535353" stroke="#d2d2d2" stroke-width="1.1"/><rect x="1087" y="199.5" width="6" height="6" fill="#535353" stroke="#d2d2d2" stroke-width="1.1"/><rect x="1073" y="214" width="37" height="1" fill="#3c3c3c"/><rect x="1082" y="219" width="1" height="4" fill="#383838"/><rect x="1084" y="219" width="1" height="4" fill="#383838"/><rect x="1086" y="219" width="1" height="4" fill="#383838"/><rect x="1088" y="219" width="1" height="4" fill="#383838"/><rect x="1090" y="219" width="1" height="4" fill="#383838"/><rect x="1092" y="219" width="1" height="4" fill="#383838"/><rect x="1094" y="219" width="1" height="4" fill="#383838"/><rect x="1096" y="219" width="1" height="4" fill="#383838"/><rect x="1098" y="219" width="1" height="4" fill="#383838"/><rect x="1100" y="219" width="1" height="4" fill="#383838"/><path d="M1091.5,231.5 H1085.2 V245.8 H1099.4 V239" fill="none" stroke="#d2d2d2" stroke-width="1.8"/><path d="M1095.2,235.6 L1100.8,230 M1094.5,230.2 H1100.8 V236.4" fill="none" stroke="#d2d2d2" stroke-width="1.8"/><rect x="1073" y="255" width="37" height="1" fill="#3c3c3c"/><rect x="1082" y="259" width="1" height="4" fill="#383838"/><rect x="1084" y="259" width="1" height="4" fill="#383838"/><rect x="1086" y="259" width="1" height="4" fill="#383838"/><rect x="1088" y="259" width="1" height="4" fill="#383838"/><rect x="1090" y="259" width="1" height="4" fill="#383838"/><rect x="1092" y="259" width="1" height="4" fill="#383838"/><rect x="1094" y="259" width="1" height="4" fill="#383838"/><rect x="1096" y="259" width="1" height="4" fill="#383838"/><rect x="1098" y="259" width="1" height="4" fill="#383838"/><rect x="1100" y="259" width="1" height="4" fill="#383838"/><rect x="1086.5" y="273.5" width="12.5" height="12" fill="none" stroke="#d2d2d2" stroke-width="1"/><rect x="1085" y="272" width="3" height="3" fill="#d2d2d2"/><rect x="1091.5" y="272" width="3" height="3" fill="#d2d2d2"/><rect x="1098" y="272" width="3" height="3" fill="#d2d2d2"/><rect x="1085" y="278.5" width="3" height="3" fill="#d2d2d2"/><rect x="1098" y="278.5" width="3" height="3" fill="#d2d2d2"/><rect x="1085" y="285" width="3" height="3" fill="#d2d2d2"/><rect x="1091.5" y="285" width="3" height="3" fill="#d2d2d2"/><rect x="1098" y="285" width="3" height="3" fill="#d2d2d2"/><rect x="1092" y="279" width="1.6" height="1.6" fill="#d2d2d2"/><rect x="1085" y="298.5" width="1.2" height="18" fill="#d2d2d2"/><rect x="1087.5" y="301" width="8" height="5" fill="#d2d2d2"/><rect x="1087.5" y="308.5" width="12.5" height="5.5" fill="#d2d2d2"/><path d="M1085,328 H1093 V331.5 H1089 V336 H1085 Z" fill="#d2d2d2"/><path d="M1093,333.5 H1100.5 V343 H1091 V339 H1095.5 V335 Z" fill="#d2d2d2"/><rect x="1089.5" y="332" width="5.5" height="6.5" fill="none" stroke="#d2d2d2" stroke-width="1"/><rect x="1073" y="352" width="37" height="1" fill="#3c3c3c"/><rect x="1113" y="77" width="252" height="26" fill="#424242"/><rect x="1113" y="103" width="252" height="1" fill="#393939"/><rect x="1113" y="77" width="49" height="27" fill="#535353"/><rect x="1162" y="77" width="1" height="27" fill="#393939"/><rect x="1208" y="77" width="1" height="26" fill="#393939"/><path d="M1118.2,89.2 L1120.2,86.8 L1122.2,89.2 M1118.2,91.6 L1120.2,94 L1122.2,91.6" fill="none" stroke="#c0c0c0" stroke-width="1"/><g fill="#c8c8c8"><rect x="1349" y="87" width="10" height="1"/><rect x="1349" y="89" width="10" height="1"/><rect x="1349" y="91" width="10" height="1"/><rect x="1349" y="93" width="10" height="1"/></g><rect x="1121.5" y="114.5" width="8" height="7.5" fill="#111" stroke="#cfcfcf" stroke-width="1"/><rect x="1118.5" y="111.5" width="7.5" height="7" fill="#fff" stroke="#111" stroke-width="1"/><path d="M1141.5,114.5 H1146.5 V120" fill="none" stroke="#d2d2d2" stroke-width="1.3"/><path d="M1139.5,114.5 L1142,112 L1142,117Z M1144,119.5 L1149,119.5 L1146.5,122.5Z" fill="#d2d2d2"/><rect x="1128.5" y="138.5" width="19" height="19" fill="#fff" stroke="#2a2a2a" stroke-width="1"/><rect x="1133.5" y="143.5" width="9" height="9" fill="#454545" stroke="#111" stroke-width="1"/><line x1="1129" y1="157" x2="1147" y2="139" stroke="#c4181d" stroke-width="2.6"/><rect x="1118.5" y="128.5" width="19" height="19" fill="#131131" stroke="#222" stroke-width="1"/><rect x="1119.5" y="129.5" width="17" height="17" fill="none" stroke="#fff" stroke-width="1.6"/><defs><linearGradient id="gr" x1="0" x2="1"><stop offset="0" stop-color="#001131"/><stop offset="1" stop-color="#e41a3c"/></linearGradient><linearGradient id="gg" x1="0" x2="1"><stop offset="0" stop-color="#130031"/><stop offset="1" stop-color="#22d847"/></linearGradient><linearGradient id="gb" x1="0" x2="1"><stop offset="0" stop-color="#131100"/><stop offset="1" stop-color="#1a17e0"/></linearGradient><linearGradient id="spw" x1="0" x2="1"><stop offset="0" stop-color="#ff0000"/><stop offset="0.17" stop-color="#ffff00"/><stop offset="0.33" stop-color="#00ff00"/><stop offset="0.5" stop-color="#00ffff"/><stop offset="0.67" stop-color="#0000ff"/><stop offset="0.83" stop-color="#ff00ff"/><stop offset="1" stop-color="#ff0000"/></linearGradient><linearGradient id="spv" x1="0" x2="0" y1="0" y2="1"><stop offset="0" stop-color="#ffffff" stop-opacity="1"/><stop offset="0.5" stop-color="#ffffff" stop-opacity="0"/><stop offset="0.5" stop-color="#000000" stop-opacity="0"/><stop offset="1" stop-color="#000000" stop-opacity="1"/></linearGradient></defs><rect x="1184" y="120.5" width="101.5" height="4" fill="url(#gr)"/><path d="M1186.8,131.5 V128 L1191.3,124.5 L1195.8,128 V131.5 Z" fill="#d0d0d0"/><rect x="1293.5" y="112.5" width="35.5" height="20.5" rx="2.5" fill="#464646" stroke="#5f5f5f" stroke-width="1"/><rect x="1184" y="153.5" width="101.5" height="4" fill="url(#gg)"/><path d="M1186.0,164.5 V161 L1190.5,157.5 L1195.0,161 V164.5 Z" fill="#d0d0d0"/><rect x="1293.5" y="145.5" width="35.5" height="20.5" rx="2.5" fill="#464646" stroke="#5f5f5f" stroke-width="1"/><rect x="1184" y="186.5" width="101.5" height="4" fill="url(#gb)"/><path d="M1198.9,197.5 V194 L1203.4,190.5 L1207.9,194 V197.5 Z" fill="#d0d0d0"/><rect x="1293.5" y="178.5" width="35.5" height="20.5" rx="2.5" fill="#464646" stroke="#5f5f5f" stroke-width="1"/><rect x="1118.5" y="218.5" width="13" height="13" fill="#fff"/><line x1="1119" y1="231" x2="1131" y2="219" stroke="#c8141b" stroke-width="2"/><rect x="1131.5" y="218.5" width="13" height="13" fill="#000"/><rect x="1144.5" y="218.5" width="13" height="13" fill="#fff"/><rect x="1118.5" y="218.5" width="39" height="13" fill="none" stroke="#222" stroke-width="1"/><rect x="1289.5" y="215.5" width="59" height="20" rx="2.5" fill="#464646" stroke="#5f5f5f" stroke-width="1"/><rect x="1119.5" y="241.5" width="228.5" height="23" fill="url(#spw)" stroke="#2e2e2e" stroke-width="1"/><rect x="1120" y="242" width="227.5" height="22" fill="url(#spv)"/><rect x="1113" y="270.5" width="252" height="3" fill="#3a3a3a"/><rect x="1113" y="273.5" width="252" height="27" fill="#424242"/><rect x="1113" y="300" width="252" height="1" fill="#393939"/><rect x="1113" y="273.5" width="79" height="28" fill="#535353"/><rect x="1192" y="273.5" width="1" height="27" fill="#393939"/><path d="M1118.2,286.2 L1120.2,283.8 L1122.2,286.2 M1118.2,288.6 L1120.2,291 L1122.2,288.6" fill="none" stroke="#c0c0c0" stroke-width="1"/><g fill="#c8c8c8"><rect x="1349" y="284" width="10" height="1"/><rect x="1349" y="286" width="10" height="1"/><rect x="1349" y="288" width="10" height="1"/><rect x="1349" y="290" width="10" height="1"/></g><rect x="1118.5" y="309.5" width="20" height="20" fill="#131131" stroke="#000" stroke-width="1"/><rect x="1120" y="311" width="17" height="17" fill="none" stroke="#fff" stroke-width="2"/><rect x="1144.5" y="307.5" width="214.5" height="25" rx="2.5" fill="#4d4d4d" stroke="#5a5a5a" stroke-width="1"/><rect x="1341.5" y="308" width="1" height="24" fill="#474747"/><rect x="1147.5" y="311.5" width="16" height="16" fill="#131131" stroke="#fff" stroke-width="1.2"/><rect x="1164" y="312" width="16" height="16" fill="#2d2a8f"/><rect x="1180" y="312" width="16" height="16" fill="#8c2121"/><rect x="1196" y="312" width="16" height="16" fill="#473a24"/><rect x="1212" y="312" width="16" height="16" fill="#4d8a49"/><polyline points="1346.5,317.8 1350,321 1353.5,317.8" fill="none" stroke="#e8e8e8" stroke-width="1.5"/><path d="M1235.5,343.5 L1241.5,343.5 L1238.5,347Z" fill="#d0d0d0"/><rect x="1118.5" y="356" width="241" height="75.5" rx="2" fill="#555"/><rect x="1119.0" y="356.6" width="25.7" height="14.2" fill="#000000"/><rect x="1145.7" y="356.6" width="25.9" height="14.2" fill="#08060f"/><rect x="1172.6" y="356.6" width="25.2" height="14.2" fill="#0b0a1b"/><rect x="1198.8" y="356.6" width="25.9" height="14.2" fill="#0f0d26"/><rect x="1225.7" y="356.6" width="25.6" height="14.2" fill="#131131"/><rect x="1252.3" y="356.6" width="26.4" height="14.2" fill="#44425c"/><rect x="1279.7" y="356.6" width="25.2" height="14.2" fill="#71707f"/><rect x="1305.9" y="356.6" width="25.9" height="14.2" fill="#a2a1aa"/><rect x="1332.8" y="356.6" width="25.5" height="14.2" fill="#d0cfd3"/><rect x="1119.0" y="371.8" width="25.7" height="14.0" fill="#000000"/><rect x="1145.7" y="371.8" width="25.9" height="14.0" fill="#0c0a24"/><rect x="1172.6" y="371.8" width="25.2" height="14.0" fill="#150f4b"/><rect x="1198.8" y="371.8" width="25.9" height="14.0" fill="#201a72"/><rect x="1225.7" y="371.8" width="25.6" height="14.0" fill="#2a2494"/><rect x="1252.3" y="371.8" width="26.4" height="14.0" fill="#5a51a6"/><rect x="1279.7" y="371.8" width="25.2" height="14.0" fill="#7e79b8"/><rect x="1305.9" y="371.8" width="25.9" height="14.0" fill="#a6a2d1"/><rect x="1332.8" y="371.8" width="25.5" height="14.0" fill="#d4d2e8"/><rect x="1119.0" y="386.8" width="25.7" height="13.6" fill="#000000"/><rect x="1145.7" y="386.8" width="25.9" height="13.6" fill="#230909"/><rect x="1172.6" y="386.8" width="25.2" height="13.6" fill="#461111"/><rect x="1198.8" y="386.8" width="25.9" height="13.6" fill="#681a1a"/><rect x="1225.7" y="386.8" width="25.6" height="13.6" fill="#8c2121"/><rect x="1252.3" y="386.8" width="26.4" height="13.6" fill="#a95555"/><rect x="1279.7" y="386.8" width="25.2" height="13.6" fill="#b87c7b"/><rect x="1305.9" y="386.8" width="25.9" height="13.6" fill="#d0a7a6"/><rect x="1332.8" y="386.8" width="25.5" height="13.6" fill="#e8d3d2"/><rect x="1119.0" y="401.4" width="25.7" height="14.0" fill="#000000"/><rect x="1145.7" y="401.4" width="25.9" height="14.0" fill="#12100b"/><rect x="1172.6" y="401.4" width="25.2" height="14.0" fill="#221b12"/><rect x="1198.8" y="401.4" width="25.9" height="14.0" fill="#33291a"/><rect x="1225.7" y="401.4" width="25.6" height="14.0" fill="#473a24"/><rect x="1252.3" y="401.4" width="26.4" height="14.0" fill="#6d6554"/><rect x="1279.7" y="401.4" width="25.2" height="14.0" fill="#918b7e"/><rect x="1305.9" y="401.4" width="25.9" height="14.0" fill="#b4b0a7"/><rect x="1332.8" y="401.4" width="25.5" height="14.0" fill="#d8d6d1"/><rect x="1119.0" y="416.4" width="25.7" height="13.6" fill="#000000"/><rect x="1145.7" y="416.4" width="25.9" height="13.6" fill="#152314"/><rect x="1172.6" y="416.4" width="25.2" height="13.6" fill="#264526"/><rect x="1198.8" y="416.4" width="25.9" height="13.6" fill="#386836"/><rect x="1225.7" y="416.4" width="25.6" height="13.6" fill="#4c8a48"/><rect x="1252.3" y="416.4" width="26.4" height="13.6" fill="#73a06e"/><rect x="1279.7" y="416.4" width="25.2" height="13.6" fill="#93b590"/><rect x="1305.9" y="416.4" width="25.9" height="13.6" fill="#b5ccb2"/><rect x="1332.8" y="416.4" width="25.5" height="13.6" fill="#d9e4d8"/><g fill="none" stroke="#d2d2d2" stroke-width="1"><rect x="1124.5" y="438.5" width="12" height="9"/><line x1="1124.5" y1="441.5" x2="1136.5" y2="441.5"/><line x1="1124.5" y1="444.5" x2="1136.5" y2="444.5"/><line x1="1128.5" y1="438.5" x2="1128.5" y2="447.5"/><line x1="1132.5" y1="438.5" x2="1132.5" y2="447.5"/></g><path d="M1138,447.5 L1141,447.5 L1139.5,449Z" fill="#d2d2d2"/><circle cx="1306" cy="442.5" r="5.6" fill="#d2d2d2"/><g stroke="#7a7a7a" stroke-width="0.9"><line x1="1306" y1="437" x2="1306" y2="448"/><line x1="1300.5" y1="442.5" x2="1311.5" y2="442.5"/><line x1="1302" y1="438.5" x2="1310" y2="446.5"/><line x1="1310" y1="438.5" x2="1302" y2="446.5"/></g><circle cx="1306" cy="442.5" r="1.5" fill="#555"/><rect x="1328.5" y="438.5" width="11" height="8.5" fill="none" stroke="#d2d2d2" stroke-width="1"/><line x1="1332.5" y1="438.5" x2="1332.5" y2="447" stroke="#d2d2d2" stroke-width="1"/><line x1="1336" y1="438.5" x2="1336" y2="447" stroke="#d2d2d2" stroke-width="1"/><path d="M1324,444 H1330 M1327,441 V447.5" stroke="#d2d2d2" stroke-width="1.6"/><rect x="1113" y="451" width="252" height="4.5" fill="#3a3a3a"/><rect x="1113" y="455.5" width="252" height="26" fill="#424242"/><rect x="1113" y="481" width="252" height="1" fill="#393939"/><rect x="1113" y="455.5" width="61" height="27" fill="#535353"/><rect x="1174" y="455.5" width="1" height="26" fill="#393939"/><rect x="1231" y="455.5" width="1" height="26" fill="#393939"/><g fill="#c8c8c8"><rect x="1349" y="465" width="10" height="1"/><rect x="1349" y="467" width="10" height="1"/><rect x="1349" y="469" width="10" height="1"/><rect x="1349" y="471" width="10" height="1"/></g><rect x="1128.5" y="498.5" width="19" height="19" fill="#fff" stroke="#2a2a2a" stroke-width="1"/><rect x="1133.5" y="503.5" width="9" height="9" fill="#454545" stroke="#111" stroke-width="1"/><line x1="1129" y1="517" x2="1147" y2="499" stroke="#c4181d" stroke-width="2.6"/><rect x="1118.5" y="488.5" width="19" height="19" fill="#131131" stroke="#222" stroke-width="1"/><rect x="1119.5" y="489.5" width="17" height="17" fill="none" stroke="#fff" stroke-width="1.6"/><rect x="1311.5" y="488.5" width="48" height="23" rx="2" fill="#4d4d4d" stroke="#5a5a5a" stroke-width="1"/><rect x="1335" y="489" width="24" height="22" rx="1" fill="#353535"/><g fill="#d2d2d2"><rect x="1317" y="493.5" width="12" height="1.6"/><rect x="1317" y="497" width="12" height="1.6"/><rect x="1317" y="500.5" width="12" height="1.6"/><rect x="1317" y="504" width="12" height="1.6"/></g><rect x="1341" y="493" width="3" height="3" fill="#d2d2d2"/><rect x="1341" y="497" width="3" height="3" fill="#d2d2d2"/><rect x="1341" y="501" width="3" height="3" fill="#d2d2d2"/><rect x="1345" y="493" width="3" height="3" fill="#d2d2d2"/><rect x="1345" y="497" width="3" height="3" fill="#d2d2d2"/><rect x="1345" y="501" width="3" height="3" fill="#d2d2d2"/><rect x="1349" y="493" width="3" height="3" fill="#d2d2d2"/><rect x="1349" y="497" width="3" height="3" fill="#d2d2d2"/><rect x="1349" y="501" width="3" height="3" fill="#d2d2d2"/><rect x="1118.5" y="523.5" width="241.5" height="153" fill="none" stroke="#5c5c5c" stroke-width="1"/><defs><linearGradient id="sg1" x1="0" x2="1"><stop offset="0" stop-color="#fff"/><stop offset="0.85" stop-color="#444"/><stop offset="1" stop-color="#222"/></linearGradient><linearGradient id="sg2" x1="0" x2="1"><stop offset="0" stop-color="#f9d823"/><stop offset="1" stop-color="#f07a38"/></linearGradient><linearGradient id="sgb" x1="0" x2="1"><stop offset="0" stop-color="#3a9ee8" stop-opacity="1"/><stop offset="1" stop-color="#b8d8f8" stop-opacity="0.25"/></linearGradient><pattern id="chk" width="3" height="3" patternUnits="userSpaceOnUse"><rect width="3" height="3" fill="#9cc8ee"/><rect width="1.5" height="1.5" fill="#3b8fd9"/><rect x="1.5" y="1.5" width="1.5" height="1.5" fill="#3b8fd9"/></pattern><pattern id="chk2" width="3" height="3" patternUnits="userSpaceOnUse"><rect width="3" height="3" fill="#fff"/><rect width="1.5" height="1.5" fill="#bbb"/><rect x="1.5" y="1.5" width="1.5" height="1.5" fill="#bbb"/></pattern></defs><rect x="1119" y="524" width="13" height="13" fill="#fff"/><line x1="1119.5" y1="536.5" x2="1131.5" y2="524.5" stroke="#c8141b" stroke-width="1.8"/><rect x="1133" y="524" width="13" height="13" fill="#fff"/><circle cx="1139.5" cy="530.5" r="3.5" fill="none" stroke="#222" stroke-width="0.8"/><path d="M1139.5,525 V536 M1134,530.5 H1145" stroke="#222" stroke-width="0.8"/><circle cx="1139.5" cy="530.5" r="1" fill="#222"/><rect x="1147" y="524" width="13" height="13" fill="#ffffff"/><rect x="1161" y="524" width="13" height="13" fill="#231f20"/><rect x="1175" y="524" width="13" height="13" fill="#ed1c24"/><rect x="1189" y="524" width="13" height="13" fill="#fff200"/><rect x="1203" y="524" width="13" height="13" fill="#00a651"/><rect x="1217" y="524" width="13" height="13" fill="#00aeef"/><rect x="1231" y="524" width="13" height="13" fill="#2e3192"/><rect x="1245" y="524" width="13" height="13" fill="#ec008c"/><rect x="1259" y="524" width="13" height="13" fill="#be1e2d"/><rect x="1273" y="524" width="13" height="13" fill="#ef4136"/><rect x="1287" y="524" width="13" height="13" fill="#f15a29"/><rect x="1301" y="524" width="13" height="13" fill="#f7941d"/><rect x="1315" y="524" width="13" height="13" fill="#fbb040"/><rect x="1329" y="524" width="13" height="13" fill="#f9ed32"/><rect x="1119" y="538" width="13" height="13" fill="#d7df23"/><rect x="1133" y="538" width="13" height="13" fill="#8dc63f"/><rect x="1147" y="538" width="13" height="13" fill="#39b54a"/><rect x="1161" y="538" width="13" height="13" fill="#009444"/><rect x="1175" y="538" width="13" height="13" fill="#006838"/><rect x="1189" y="538" width="13" height="13" fill="#2bb673"/><rect x="1203" y="538" width="13" height="13" fill="#00a79d"/><rect x="1217" y="538" width="13" height="13" fill="#27aae1"/><rect x="1231" y="538" width="13" height="13" fill="#1c75bc"/><rect x="1245" y="538" width="13" height="13" fill="#2b3990"/><rect x="1259" y="538" width="13" height="13" fill="#262262"/><rect x="1273" y="538" width="13" height="13" fill="#662d91"/><rect x="1287" y="538" width="13" height="13" fill="#92278f"/><rect x="1301" y="538" width="13" height="13" fill="#9e1f63"/><rect x="1315" y="538" width="13" height="13" fill="#da1c5c"/><rect x="1329" y="538" width="13" height="13" fill="#ee2a7b"/><rect x="1119" y="552" width="13" height="13" fill="#c2b59b"/><rect x="1133" y="552" width="13" height="13" fill="#998675"/><rect x="1147" y="552" width="13" height="13" fill="#736357"/><rect x="1161" y="552" width="13" height="13" fill="#594a42"/><rect x="1175" y="552" width="13" height="13" fill="#c69c6d"/><rect x="1189" y="552" width="13" height="13" fill="#a67c52"/><rect x="1203" y="552" width="13" height="13" fill="#8c6239"/><rect x="1217" y="552" width="13" height="13" fill="#754c24"/><rect x="1231" y="552" width="13" height="13" fill="#603913"/><rect x="1245" y="552" width="13" height="13" fill="#3c2415"/><rect x="1259" y="552" width="13" height="13" fill="url(#sg1)"/><rect x="1273" y="552" width="13" height="13" fill="url(#sg2)"/><rect x="1287" y="552" width="13" height="13" fill="url(#chk2)"/><rect x="1287" y="552" width="13" height="13" fill="url(#sgb)"/><rect x="1301" y="552" width="13" height="13" fill="#000"/><circle cx="1307.5" cy="558.5" r="4.5" fill="url(#chk2)"/><rect x="1315" y="552" width="13" height="13" fill="#7cc040"/><ellipse cx="1321.5" cy="553.8" rx="4" ry="1.8" fill="#f0f8e0"/><ellipse cx="1321.5" cy="563.2" rx="4" ry="1.8" fill="#f0f8e0"/><circle cx="1321.5" cy="558.5" r="2.6" fill="#4a9e28"/><rect x="1329" y="552" width="13" height="13" fill="#a88a6c"/><path d="M1330,554 q2,-2 4,0 t3,2 M1335,558 q2,-2 5,0 M1330,560 q3,2 5,-1 M1332,563 q3,-1 6,1 M1338,555 q2,1 3,-1" fill="none" stroke="#e6d6c2" stroke-width="1.3"/><rect x="1120" y="571.5" width="11" height="7" fill="#cfcfcf"/><rect x="1120" y="569.5" width="4" height="1.2" fill="#cfcfcf"/><rect x="1133" y="568" width="13" height="13" fill="#231f20"/><rect x="1147" y="568" width="13" height="13" fill="#414042"/><rect x="1161" y="568" width="13" height="13" fill="#58595b"/><rect x="1175" y="568" width="13" height="13" fill="#6d6e71"/><rect x="1189" y="568" width="13" height="13" fill="#808285"/><rect x="1203" y="568" width="13" height="13" fill="#939598"/><rect x="1217" y="568" width="13" height="13" fill="#a7a9ac"/><rect x="1231" y="568" width="13" height="13" fill="#bcbec0"/><rect x="1245" y="568" width="13" height="13" fill="#d1d3d4"/><rect x="1259" y="568" width="13" height="13" fill="#e6e7e8"/><rect x="1273" y="568" width="13" height="13" fill="#f1f1f2"/><rect x="1120" y="587.5" width="11" height="7" fill="#cfcfcf"/><rect x="1120" y="585.5" width="4" height="1.2" fill="#cfcfcf"/><rect x="1133" y="584" width="13" height="13" fill="#ed1c24"/><rect x="1147" y="584" width="13" height="13" fill="#f26522"/><rect x="1161" y="584" width="13" height="13" fill="#ffde17"/><rect x="1175" y="584" width="13" height="13" fill="#00a651"/><rect x="1189" y="584" width="13" height="13" fill="#21409a"/><rect x="1203" y="584" width="13" height="13" fill="#7f3f98"/><g fill="#d2d2d2"><rect x="1124" y="681.6" width="2" height="9.2"/><rect x="1127.3" y="681.3" width="2.2" height="9.5"/><path d="M1129.6,681.4 L1131.6,681.4 L1134.6,690.8 L1132.6,690.8 Z"/><path d="M1135.8,690.2 L1139,690.2 L1137.4,692 Z"/></g><rect x="1128" y="682.5" width="0.8" height="2.5" fill="#535353"/><circle cx="1155.5" cy="686.2" r="3.2" fill="none" stroke="#d2d2d2" stroke-width="1.3"/><circle cx="1155.5" cy="686.2" r="1.3" fill="#d2d2d2"/><circle cx="1159.4" cy="682.3" r="1.6" fill="#d2d2d2"/><circle cx="1159.4" cy="690.4" r="1.6" fill="#d2d2d2"/><path d="M1180.5,690.8 H1190.5 A2.6,2.6 0 0 0 1191.2,685.6 A4.4,4.4 0 0 0 1183,684.4 A2.8,2.8 0 0 0 1180.5,690.8 Z" fill="#6e6e6e"/><path d="M1174,688.9 H1180" stroke="#6e6e6e" stroke-width="1.3"/><path d="M1181,688.9 L1178.5,686.6 L1178.5,691.2 Z" fill="#6e6e6e"/><rect x="1221.0" y="681.0" width="2.8" height="2.8" fill="#d2d2d2"/><rect x="1221.0" y="684.7" width="2.8" height="2.8" fill="#d2d2d2"/><rect x="1221.0" y="688.4" width="2.8" height="2.8" fill="#d2d2d2"/><rect x="1224.7" y="681.0" width="2.8" height="2.8" fill="#d2d2d2"/><rect x="1224.7" y="684.7" width="2.8" height="2.8" fill="#d2d2d2"/><rect x="1224.7" y="688.4" width="2.8" height="2.8" fill="#d2d2d2"/><rect x="1228.4" y="681.0" width="2.8" height="2.8" fill="#d2d2d2"/><rect x="1228.4" y="684.7" width="2.8" height="2.8" fill="#d2d2d2"/><rect x="1228.4" y="688.4" width="2.8" height="2.8" fill="#d2d2d2"/><path d="M1233.5,691 L1236.5,691 L1235,692.5Z" fill="#d2d2d2"/><rect x="1248.5" y="681.5" width="10.5" height="11" fill="none" stroke="#6e6e6e" stroke-width="1"/><g fill="#6e6e6e"><rect x="1250.5" y="684.5" width="1.2" height="1"/><rect x="1252.5" y="684.5" width="5" height="1"/><rect x="1250.5" y="687" width="1.2" height="1"/><rect x="1252.5" y="687" width="5" height="1"/><rect x="1250.5" y="689.5" width="1.2" height="1"/><rect x="1252.5" y="689.5" width="5" height="1"/></g><path d="M1273,683.5 H1286 V692 H1273 Z" fill="#d2d2d2"/><rect x="1273" y="681" width="5" height="1.5" fill="#d2d2d2"/><path d="M1301,681.5 H1311.5 V692 H1304.5 L1301,688.5 Z" fill="#d2d2d2"/><path d="M1301,689 L1304,689 L1304,692Z" fill="#535353"/><g fill="none" stroke="#6e6e6e" stroke-width="1"><rect x="1328.5" y="684" width="8" height="9"/><line x1="1327" y1="683.5" x2="1338" y2="683.5"/><rect x="1330.5" y="681.5" width="4" height="2"/><line x1="1331" y1="686" x2="1331" y2="691"/><line x1="1334" y1="686" x2="1334" y2="691"/></g><rect x="1113" y="696.5" width="252" height="2.5" fill="#3a3a3a"/><rect x="1113" y="699" width="252" height="28" fill="#424242"/><rect x="1166" y="699" width="1" height="28" fill="#393939"/><rect x="1216" y="699" width="1" height="28" fill="#393939"/><rect x="1217" y="699" width="57" height="28" fill="#535353"/><rect x="1274" y="699" width="1" height="28" fill="#393939"/><g fill="#c8c8c8"><rect x="1349" y="709" width="10" height="1"/><rect x="1349" y="711" width="10" height="1"/><rect x="1349" y="713" width="10" height="1"/><rect x="1349" y="715" width="10" height="1"/></g></svg>
<div class="t" style="left:1127.20px;top:85.53px;font-size:10px;color:#f0f0f0;font-weight:bold;letter-spacing:0.048px;">Color</div>
<div class="t" style="left:1171.10px;top:85.53px;font-size:10px;color:#b8b8b8;font-weight:bold;letter-spacing:-0.770px;">Layers</div>
<div class="t" style="left:1165.00px;top:119.03px;font-size:10px;color:#c8c8c8;font-weight:bold;">R</div>
<div class="t" style="left:1165.00px;top:152.03px;font-size:10px;color:#c8c8c8;font-weight:bold;">G</div>
<div class="t" style="left:1165.00px;top:185.03px;font-size:10px;color:#c8c8c8;font-weight:bold;">B</div>
<div class="t" style="left:1298.00px;top:116.11px;font-size:10.5px;color:#f4f4f4;letter-spacing:-1.188px;">19</div>
<div class="t" style="left:1298.00px;top:149.11px;font-size:10.5px;color:#f4f4f4;letter-spacing:-1.188px;">17</div>
<div class="t" style="left:1298.00px;top:182.11px;font-size:10.5px;color:#f4f4f4;letter-spacing:-0.688px;">49</div>
<div class="t" style="left:1279.00px;top:221.66px;font-size:9.5px;color:#b8b8b8;font-weight:bold;">#</div>
<div class="t" style="left:1295.00px;top:219.91px;font-size:10.5px;color:#f4f4f4;letter-spacing:-0.776px;">131131</div>
<div class="t" style="left:1127.50px;top:282.54px;font-size:10px;color:#f0f0f0;font-weight:bold;letter-spacing:-0.073px;">Color Guide</div>
<div class="t" style="left:1144.50px;top:340.54px;font-size:10px;color:#c8c8c8;font-weight:bold;letter-spacing:0.344px;">Shades</div>
<div class="t" style="left:1307.10px;top:340.54px;font-size:10px;color:#c8c8c8;font-weight:bold;letter-spacing:0.424px;">Tints</div>
<div class="t" style="left:1149.70px;top:439.04px;font-size:10px;color:#c8c8c8;font-weight:bold;letter-spacing:-0.500px;">None</div>
<div class="t" style="left:1121.70px;top:463.54px;font-size:10px;color:#f0f0f0;font-weight:bold;letter-spacing:-0.306px;">Swatches</div>
<div class="t" style="left:1182.80px;top:463.54px;font-size:10px;color:#b0b0b0;font-weight:bold;letter-spacing:-0.319px;">Libraries</div>
<div class="t" style="left:1121.70px;top:707.53px;font-size:10px;color:#a8a8a8;font-weight:bold;letter-spacing:-0.503px;">Brushes</div>
<div class="t" style="left:1175.50px;top:707.53px;font-size:10px;color:#a8a8a8;font-weight:bold;letter-spacing:0.175px;">Stroke</div>
<div class="t" style="left:1225.20px;top:707.53px;font-size:10px;color:#f0f0f0;font-weight:bold;letter-spacing:-0.198px;">Symbols</div>
</body></html>
